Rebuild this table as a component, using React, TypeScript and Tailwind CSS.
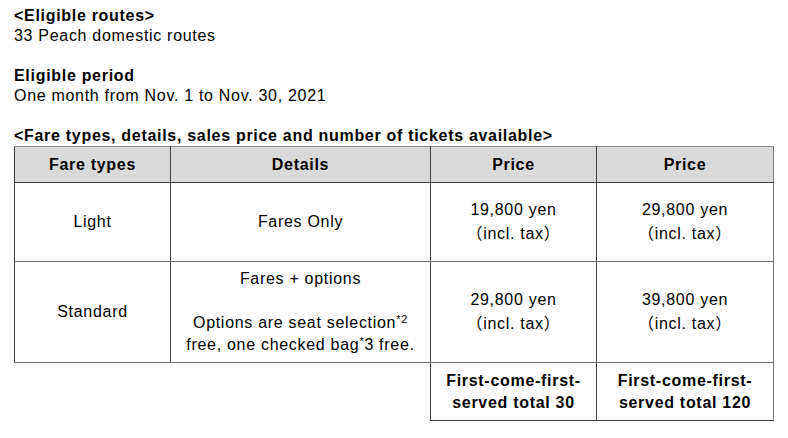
const font = { fontFamily: '"Liberation Sans", Arial, "Noto Sans CJK JP", sans-serif' }

function Tax() {
  return (
    <span>
      <span style={{ fontFamily: '"Noto Sans CJK JP", sans-serif' }}>（</span>incl. tax
      <span style={{ fontFamily: '"Noto Sans CJK JP", sans-serif' }}>）</span>
    </span>
  )
}

const rows = [
  {
    type: 'Light',
    details: <span>Fares Only</span>,
    p1: '19,800 yen',
    p2: '29,800 yen',
    h: 'h-[79px]',
  },
  {
    type: 'Standard',
    details: (
      <span>
        Fares + options
        <br />
        <br />
        Options are seat selection<sup className="text-[11px]">*2</sup>
        <br />
        free, one checked bag<sup className="text-[11px]">*</sup>3 free.
      </span>
    ),
    p1: '29,800 yen',
    p2: '39,800 yen',
    h: 'h-[101px]',
  },
]

export default function App() {
  return (
    <div
      className="min-h-[438px] w-[788px] bg-white pl-[14px] pt-[6px] text-[16px] leading-[20px] tracking-[0.7px] text-black"
      style={font}
    >
      <p className="font-bold">&lt;Eligible routes&gt;</p>
      <p>33 Peach domestic routes</p>
      <p className="h-[20px]" />
      <p className="font-bold">Eligible period</p>
      <p>One month from Nov. 1 to Nov. 30, 2021</p>
      <p className="h-[20px]" />
      <p className="font-bold whitespace-nowrap">&lt;Fare types, details, sales price and number of tickets available&gt;</p>

      <table className="border-collapse table-fixed w-[759px] text-center leading-[22px]">
        <colgroup>
          <col className="w-[156px]" />
          <col className="w-[260px]" />
          <col className="w-[166px]" />
          <col className="w-[177px]" />
        </colgroup>
        <thead>
          <tr className="h-[36px] bg-[#d9d9d9] font-bold">
            <th className="border border-[#404040] border-t-[#8a8a8a]">Fare types</th>
            <th className="border border-[#404040] border-t-[#8a8a8a]">Details</th>
            <th className="border border-[#404040] border-t-[#8a8a8a]">Price</th>
            <th className="border border-[#404040] border-t-[#8a8a8a] border-r-[#7a7a7a]">Price</th>
          </tr>
        </thead>
        <tbody>
          {rows.map((r) => (
            <tr key={r.type} className={r.h}>
              <td className="border border-[#404040] border-b-[#707070]">{r.type}</td>
              <td className="border border-[#404040] border-b-[#707070] px-1">{r.details}</td>
              <td className="border border-[#404040] border-b-[#707070]">
                {r.p1}
                <br />
                <Tax />
              </td>
              <td className="border border-[#404040] border-b-[#707070] border-r-[#7a7a7a]">
                {r.p2}
                <br />
                <Tax />
              </td>
            </tr>
          ))}
          <tr className="h-[58px] font-bold">
            <td />
            <td />
            <td className="border border-[#404040] border-t-[#707070]">
              First-come-first-
              <br />
              served total 30
            </td>
            <td className="border border-[#404040] border-t-[#707070] border-r-[#7a7a7a]">
              First-come-first-
              <br />
              served total 120
            </td>
          </tr>
        </tbody>
      </table>
    </div>
  )
}
